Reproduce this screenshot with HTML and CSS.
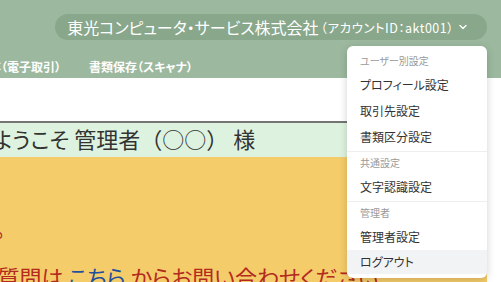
FILE: index.html
```html
<!DOCTYPE html>
<html lang="ja">
<head>
  <meta charset="UTF-8">
  <meta name="viewport" content="width=device-width, initial-scale=1.0">
  <title>書類保存 - トップ</title>
  <link rel="stylesheet" href="styles.css">
</head>
<body>
<div class="page">
  <header class="topbar">
    <div class="account-row">
      <div class="account">
        <button class="account-pill" type="button">
          <span class="company">東光コンピュータ・サービス株式会社</span>
          <span class="account-id">（アカウントID：akt001）</span>
          <svg class="chevron" width="8" height="6" viewBox="0 0 8 6"><polyline points="1,1.5 4,4.5 7,1.5" fill="none" stroke="#ffffff" stroke-width="1.4" stroke-linecap="round" stroke-linejoin="round"/></svg>
        </button>

        <div class="account-menu">
          <div class="menu-header">ユーザー別設定</div>
          <a href="#" class="menu-item">プロフィール設定</a>
          <a href="#" class="menu-item">取引先設定</a>
          <a href="#" class="menu-item">書類区分設定</a>
          <div class="menu-divider"></div>
          <div class="menu-header">共通設定</div>
          <a href="#" class="menu-item">文字認識設定</a>
          <div class="menu-divider"></div>
          <div class="menu-header">管理者</div>
          <a href="#" class="menu-item">管理者設定</a>
          <a href="#" class="menu-item active">ログアウト</a>
        </div>
      </div>
    </div>

    <nav class="nav">
      <a href="#" class="nav-link">書類保存（電子取引）</a>
      <a href="#" class="nav-link">書類保存（スキャナ）</a>
    </nav>
  </header>

  <main class="main">
    <div class="welcome">ようこそ <span class="welcome-name">管理者（○○）</span> 様</div>
    <div class="notice">
      <p class="notice-memo">※ご確認ください。</p>
      <p class="notice-contact">ご質問は <a href="#" class="notice-link">こちら</a> からお問い合わせください</p>
    </div>
  </main>
</div>
</body>
</html>
```

FILE: styles.css
```css
/* Reset */
* {
  margin: 0;
  padding: 0;
  box-sizing: border-box;
}

body {
  font-family: 'Noto Sans CJK JP', 'Noto Sans', sans-serif;
  font-feature-settings: "palt";
  color: #333;
  background: #fff;
  overflow: hidden;
}

/* la pagina e' piu' larga della finestra, scorsa a destra */
.page {
  width: calc(100% + 80px);
  margin-left: -80px;
}

/* Barra superiore */
.topbar {
  background: #9cb99f;
  height: 78px;
  display: flex;
  flex-direction: column;
}

.account-row {
  display: flex;
  justify-content: flex-end;
  padding: 14px 14px 0 0;
}

.account {
  position: relative;
}

.account-pill {
  display: flex;
  align-items: center;
  height: 26px;
  padding: 0 20px 0 12px;
  border: none;
  border-radius: 13px;
  background: #88a78b;
  color: #fff;
  font-family: inherit;
  font-feature-settings: "palt";
  cursor: pointer;
}

.company {
  font-size: 16px;
}

.account-id {
  font-size: 12.5px;
  letter-spacing: 0.5px;
  margin-left: 2px;
}

.chevron {
  margin-left: 5px;
}

/* Menu account */
.account-menu {
  position: absolute;
  top: 32px;
  right: 0;
  width: 140px;
  padding: 4px 0 4px;
  background: #fff;
  border-radius: 6px;
  box-shadow: 0 2px 8px rgba(0, 0, 0, 0.18);
  z-index: 10;
}

.menu-header {
  height: 22px;
  line-height: 22px;
  padding-left: 13px;
  font-size: 10px;
  color: #9a9a9a;
}

.menu-item {
  display: block;
  height: 26px;
  line-height: 26px;
  padding-left: 13px;
  font-size: 12px;
  color: #333;
  text-decoration: none;
}

.menu-item.active {
  background: #f2f3f5;
  height: 24px;
  line-height: 24px;
}

.menu-divider {
  height: 1px;
  margin-top: 1px;
  background: #eeeeee;
}

/* Navigazione */
.nav {
  display: flex;
  gap: 28px;
  margin-top: 14px;
  padding-left: 33px;
  height: 24px;
  align-items: center;
}

.nav-link {
  color: #fff;
  font-size: 12px;
  font-weight: 700;
  text-decoration: none;
}

/* Contenuto */
.main {
  padding: 43px 14px 0 20px;
}

.welcome {
  height: 36px;
  border-top: 2px solid #747474;
  background: #def3df;
  padding-left: 53px;
  font-size: 22px;
  line-height: 30px;
  color: #333;
}

.welcome-name {
  font-feature-settings: normal;
}

.notice {
  min-height: 140px;
  background: #f5cc6a;
  padding: 54px 0 0 38px;
  color: #b32a1e;
  font-size: 22px;
  line-height: 33px;
}

.notice-memo {
  margin-left: -147px;
}

.notice-contact {
  margin-top: 16px;
}

.notice-link {
  color: #1f4f9e;
  text-decoration: none;
}
```
